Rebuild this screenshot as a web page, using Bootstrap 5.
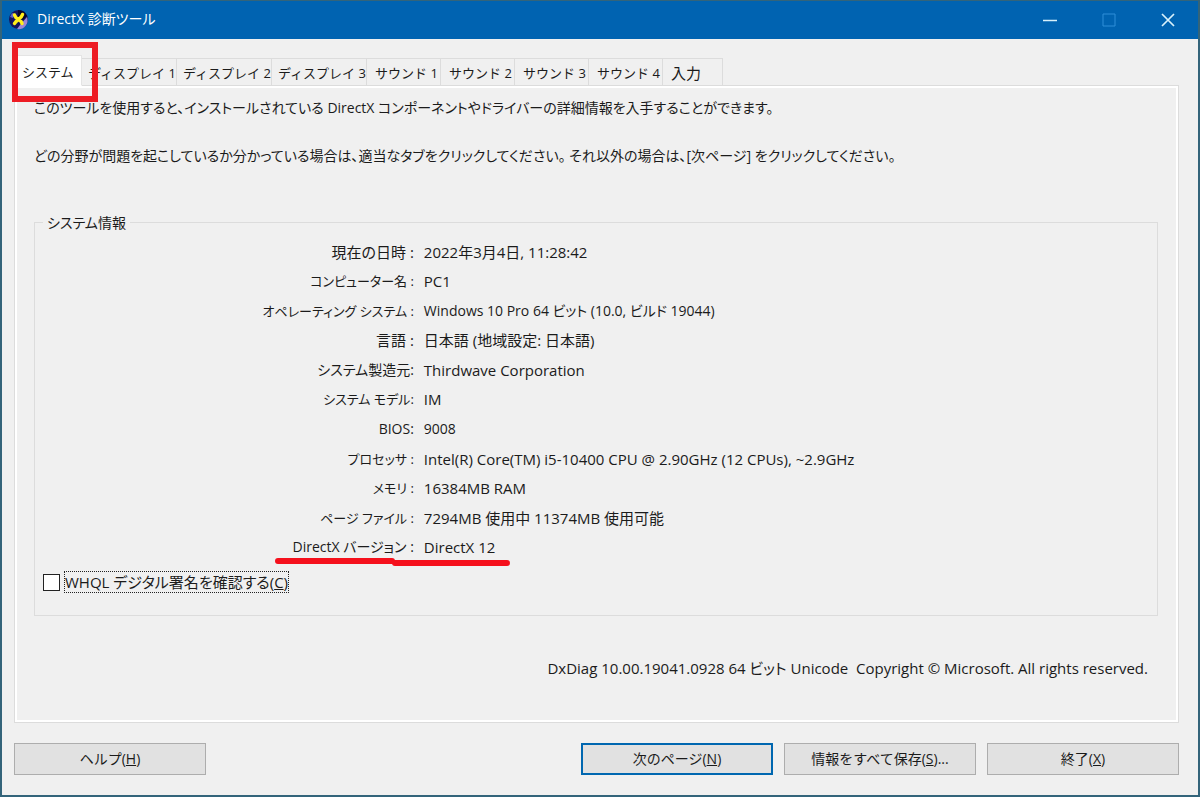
<!DOCTYPE html>
<html lang="ja">
<head>
<meta charset="utf-8">
<meta name="viewport" content="width=device-width, initial-scale=1">
<title>DirectX 診断ツール</title>
<link href="https://cdn.jsdelivr.net/npm/bootstrap@5.3.0/dist/css/bootstrap.min.css" rel="stylesheet">
<style>
  body { font-family: "Open Sans", "Noto Sans CJK JP", sans-serif; font-feature-settings: "palt"; font-size: 15px; line-height: 24px; color: #1b1b1b; background: #f0f0f0; }
  .dx-window { border: 2px solid #33647a; border-top-width: 1px; background: #f0f0f0; }
  .titlebar { height: 38px; background: #0063b1; color: #fff; padding: 0 1px 2px 6px; font-size: 14px; }
  .caption-btn { width: 59px; height: 34px; border: 0; background: none; color: #d8f1fb; padding: 0; }
  .caption-btn:disabled { color: #2f8fd8; }
  .dx-body { padding: 17px 19px 20px 12px; }
  .dx-tabs { border: 0; padding-top: 2px; margin-bottom: -1px; z-index: 1; }
  .dx-tabs .nav-link { height: 28px; margin: 0; padding: 2px 0 0 8px; border: 1px solid #dcdcdc; border-left: 0; border-radius: 0; background: #f0f0f0; color: #1b1b1b; line-height: 24px; font-size: 13px; text-align: left; white-space: nowrap; }
  .dx-tabs .nav-link.active { height: 31px; margin-top: -3px; width: 68px; background: #fff; border-color: #e4e4e4; border-bottom-color: #fff; color: #1b1b1b; }
  .dx-tabs .tab-display { width: 95px; padding-left: 6px; }
  .dx-tabs .tab-sound { width: 74px; }
  .dx-tabs .tab-input { width: 60px; font-size: 15px; }
  .tab-mark { position: absolute; left: -2px; top: -14px; width: 86px; height: 60px; border: 6px solid #ed1c24; z-index: 2; pointer-events: none; }
  .dx-panel { border: 1px solid #dcdcdc; box-shadow: inset 0 0 0 2px #fff; padding: 10px 20px 42px 19px; }
  .intro { margin-bottom: 24px; font-size: 14px; }
  .info-box { border: 1px solid #dcdcdc; padding: 0 7px 22px 8px; margin-top: 30px; }
  .info-title { margin-top: -12px; padding: 0 4px; font-size: 14px; line-height: 24px; background: #f0f0f0; }
  .info-list { grid-template-columns: 33.5% 1fr; grid-auto-rows: 1fr; align-items: center; column-gap: 10px; margin: 2px 0 9px; }
  .info-list dt { font-weight: 400; text-align: right; white-space: nowrap; }
  .info-list dd { margin: 0; }
  .mixed { font-size: 14px; }
  .info-list .kana { font-size: 13px; }
  .version-mark { position: absolute; right: -96px; bottom: -8px; width: 235px; height: 10px; z-index: 1; }
  .dx-check { width: 17px; height: 17px; margin: 0; appearance: none; border: 1px solid #222; background: #fff; }
  .whql { border: 1px dotted #222; line-height: 20px; }
  .copyright { margin-top: 40px; padding-right: 10px; }
  .dx-actions { padding-top: 20px; gap: 11px; }
  .dx-btn { width: 192px; height: 32px; padding: 0; border: 1px solid #adadad; border-radius: 0; background: #e1e1e1; color: #1b1b1b; font-size: 14px; line-height: 24px; }
  .dx-btn.is-default { border: 2px solid #0067b0; }
</style>
</head>
<body>
<div class="dx-window d-flex flex-column min-vh-100">
  <header class="titlebar d-flex align-items-center">
    <svg width="21" height="21" viewBox="0 0 21 21" aria-hidden="true">
      <circle cx="10.500" cy="10.500" r="9.500" fill="#15145c"/>
      <path d="M10 1a9.500 9.500 0 0 1 9 6l-4 4-5-3z" fill="#08082c"/>
      <path d="M19 8a9 9 0 0 1-10 12l3-4z" fill="#9a86d8"/>
      <path d="M2 8l2-4 3 1-2 4z" fill="#5e62c8"/>
      <path d="M6.500 6q1 3 4 4.500T14 14.500M14.500 5.500q-1 3-4 5T6.500 14.500" fill="none" stroke="#ffef1c" stroke-width="3.500" stroke-linecap="round"/>
    </svg>
    <span class="ms-2">DirectX 診断ツール</span>
    <div class="d-flex ms-auto">
      <button class="caption-btn" type="button" aria-label="最小化"><svg width="14" height="14" viewBox="0 0 14 14"><path d="M0 7.500h14" stroke="currentColor" stroke-width="1.500"/></svg></button>
      <button class="caption-btn" type="button" aria-label="最大化" disabled><svg width="14" height="14" viewBox="0 0 14 14"><path d="M1 1h12v12H1z" fill="none" stroke="currentColor"/></svg></button>
      <button class="caption-btn" type="button" aria-label="閉じる"><svg width="14" height="14" viewBox="0 0 14 14"><path d="M1 1l12 12M13 1L1 13" stroke="currentColor" stroke-width="1.700"/></svg></button>
    </div>
  </header>

  <main class="dx-body d-flex flex-column flex-grow-1">
    <div class="nav nav-tabs dx-tabs position-relative" role="tablist">
      <button class="nav-link active" type="button" role="tab" aria-selected="true">システム</button>
      <button class="nav-link tab-display" type="button" role="tab">ディスプレイ 1</button>
      <button class="nav-link tab-display" type="button" role="tab">ディスプレイ 2</button>
      <button class="nav-link tab-display" type="button" role="tab">ディスプレイ 3</button>
      <button class="nav-link tab-sound" type="button" role="tab">サウンド 1</button>
      <button class="nav-link tab-sound" type="button" role="tab">サウンド 2</button>
      <button class="nav-link tab-sound" type="button" role="tab">サウンド 3</button>
      <button class="nav-link tab-sound" type="button" role="tab">サウンド 4</button>
      <button class="nav-link tab-input" type="button" role="tab">入力</button>
      <div class="tab-mark"></div>
    </div>

    <section class="dx-panel d-flex flex-column flex-grow-1" role="tabpanel">
      <p class="intro">このツールを使用すると、インストールされている DirectX コンポーネントやドライバーの詳細情報を入手することができます。</p>
      <p class="intro">どの分野が問題を起こしているか分かっている場合は、適当なタブをクリックしてください。 それ以外の場合は、[次ページ] をクリックしてください。</p>

      <div class="info-box d-flex flex-column flex-grow-1" role="group" aria-labelledby="info-title">
        <div class="info-title align-self-start" id="info-title">システム情報</div>
        <dl class="info-list d-grid flex-grow-1">
          <dt>現在の日時 :</dt><dd>2022年3月4日, 11:28:42</dd>
          <dt class="kana">コンピューター名 :</dt><dd>PC1</dd>
          <dt class="kana">オペレーティング システム :</dt><dd class="mixed">Windows 10 Pro 64 ビット (10.0, ビルド 19044)</dd>
          <dt>言語 :</dt><dd>日本語 (地域設定: 日本語)</dd>
          <dt class="mixed">システム製造元:</dt><dd>Thirdwave Corporation</dd>
          <dt class="kana">システム モデル:</dt><dd>IM</dd>
          <dt class="mixed">BIOS:</dt><dd class="mixed">9008</dd>
          <dt class="kana">プロセッサ :</dt><dd>Intel(R) Core(TM) i5-10400 CPU @ 2.90GHz (12 CPUs), ~2.9GHz</dd>
          <dt class="kana">メモリ :</dt><dd>16384MB RAM</dd>
          <dt class="kana">ページ ファイル :</dt><dd>7294MB 使用中 11374MB 使用可能</dd>
          <dt class="mixed position-relative">DirectX バージョン :
            <svg class="version-mark" viewBox="0 0 235 10" aria-hidden="true"><path d="M3 4h114M120 6h112" stroke="#f5101c" stroke-width="6" stroke-linecap="round"/></svg>
          </dt><dd>DirectX 12</dd>
        </dl>
        <div class="d-flex align-items-center gap-1">
          <input class="dx-check" type="checkbox" id="whql">
          <label class="whql" for="whql">WHQL デジタル署名を確認する(<u>C</u>)</label>
        </div>
      </div>

      <p class="copyright text-end mb-0">DxDiag 10.00.19041.0928 64 ビット Unicode&nbsp; Copyright © Microsoft. All rights reserved.</p>
    </section>

    <div class="dx-actions d-flex">
      <button class="btn dx-btn me-auto" type="button">ヘルプ(<u>H</u>)</button>
      <button class="btn dx-btn is-default" type="button">次のページ(<u>N</u>)</button>
      <button class="btn dx-btn" type="button">情報をすべて保存(<u>S</u>)...</button>
      <button class="btn dx-btn" type="button">終了(<u>X</u>)</button>
    </div>
  </main>
</div>
<script src="https://cdn.jsdelivr.net/npm/bootstrap@5.3.0/dist/js/bootstrap.bundle.min.js"></script>
</body>
</html>
